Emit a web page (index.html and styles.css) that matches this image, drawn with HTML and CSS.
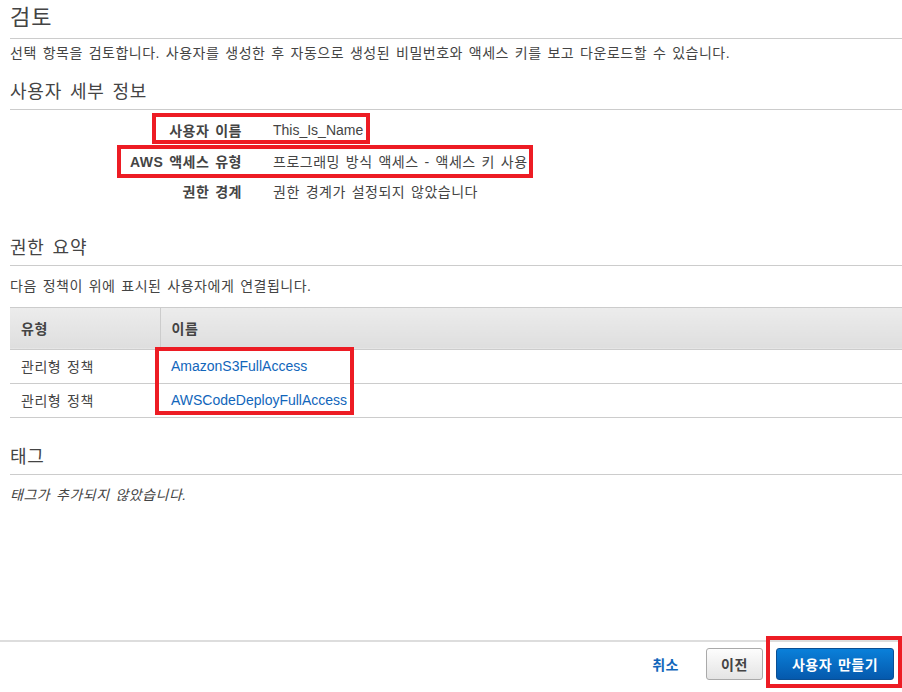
FILE: index.html
```html
<!DOCTYPE html>
<html lang="ko">
<head>
    <meta charset="UTF-8">
    <meta name="viewport" content="width=device-width, initial-scale=1.0">
    <title>검토</title>
    <link rel="stylesheet" href="styles.css">
</head>
<body>
    <div class="page">
        <main class="review">
            <h1 class="page-title">검토</h1>
            <p class="lead">선택 항목을 검토합니다. 사용자를 생성한 후 자동으로 생성된 비밀번호와 액세스 키를 보고 다운로드할 수 있습니다.</p>

            <h2 class="section-title">사용자 세부 정보</h2>
            <div class="details">
                <div class="detail-row">
                    <span class="detail-label">사용자 이름</span>
                    <span class="detail-value latin">This_Is_Name</span>
                </div>
                <div class="detail-row">
                    <span class="detail-label">AWS 액세스 유형</span>
                    <span class="detail-value">프로그래밍 방식 액세스 - 액세스 키 사용</span>
                </div>
                <div class="detail-row">
                    <span class="detail-label">권한 경계</span>
                    <span class="detail-value">권한 경계가 설정되지 않았습니다</span>
                </div>
            </div>

            <h2 class="section-title section-gap">권한 요약</h2>
            <p class="section-text">다음 정책이 위에 표시된 사용자에게 연결됩니다.</p>
            <table class="policy-table">
                <thead>
                    <tr>
                        <th class="col-type">유형</th>
                        <th>이름</th>
                    </tr>
                </thead>
                <tbody>
                    <tr>
                        <td>관리형 정책</td>
                        <td><a href="#" class="latin">AmazonS3FullAccess</a></td>
                    </tr>
                    <tr>
                        <td>관리형 정책</td>
                        <td><a href="#" class="latin">AWSCodeDeployFullAccess</a></td>
                    </tr>
                </tbody>
            </table>

            <h2 class="section-title tags-gap">태그</h2>
            <p class="empty-note">태그가 추가되지 않았습니다.</p>
        </main>

        <footer class="actions">
            <a href="#" class="cancel">취소</a>
            <button class="btn btn-secondary">이전</button>
            <button class="btn btn-primary">사용자 만들기</button>
        </footer>

        <!-- red annotation boxes drawn over the screenshot -->
        <div class="mark mark-name"></div>
        <div class="mark mark-access"></div>
        <div class="mark mark-policies"></div>
        <div class="mark mark-create"></div>
    </div>
</body>
</html>
```

FILE: styles.css
```css
* {
    box-sizing: border-box;
}
body {
    margin: 0;
    padding: 0;
    font-family: "Liberation Sans", "Noto Sans CJK KR", sans-serif;
    font-size: 14px;
    letter-spacing: 0.5px;
    word-spacing: 1.5px;
    color: #444;
    background: #fff;
}
.latin {
    letter-spacing: normal;
    word-spacing: normal;
}
.page {
    position: relative;
    height: 692px;
    display: flex;
    flex-direction: column;
    overflow: hidden;
}
.review {
    flex: 1;
    padding-left: 10px;
}
.page-title {
    margin: 0;
    padding-top: 4px;
    padding-bottom: 6px;
    font-size: 22px;
    font-weight: normal;
    line-height: 28px;
    letter-spacing: 1px;
    color: #444;
    border-bottom: 1px solid #ccc;
}
.lead {
    margin: 4px 0 0;
    line-height: 20px;
}
.section-title {
    margin: 17px 0 0;
    padding-bottom: 5px;
    font-size: 18px;
    font-weight: normal;
    line-height: 24px;
    letter-spacing: 0.8px;
    word-spacing: 2px;
    color: #444;
    border-bottom: 1px solid #ccc;
}
.section-gap {
    margin-top: 29px;
}
.tags-gap {
    margin-top: 27px;
}
.details {
    margin-top: 5px;
}
.detail-row {
    display: flex;
    align-items: center;
    height: 30.5px;
}
.detail-label {
    width: 232px;
    text-align: right;
    font-weight: bold;
}
.detail-value {
    margin-left: 31px;
}
.section-text {
    margin: 10px 0 0;
    line-height: 20px;
}
.policy-table {
    width: 100%;
    margin-top: 11px;
    border-collapse: collapse;
}
.policy-table th {
    height: 42px;
    padding: 0 11px;
    text-align: left;
    font-weight: bold;
    background: linear-gradient(#ececec, #dedede);
    border-top: 1px solid #ccc;
    border-bottom: 1px solid #ccc;
}
.policy-table th.col-type {
    width: 150px;
    border-right: 1px solid #ccc;
}
.policy-table td {
    height: 34px;
    padding: 0 11px;
    border-bottom: 1px solid #ccc;
}
.policy-table a {
    color: #1166bb;
    text-decoration: none;
}
.empty-note {
    margin: 10px 0 0;
    line-height: 20px;
    font-style: italic;
}
.actions {
    height: 52px;
    border-top: 2px solid #ddd;
    display: flex;
    align-items: center;
    justify-content: flex-end;
    padding: 0 8px 6px 0;
}
.cancel {
    color: #1166bb;
    font-weight: bold;
    text-decoration: none;
    margin-right: 27px;
}
.btn {
    height: 32px;
    font-family: inherit;
    font-size: 14px;
    font-weight: bold;
    letter-spacing: 0.5px;
    word-spacing: 1.5px;
    border-radius: 3px;
    cursor: pointer;
}
.btn-secondary {
    width: 57px;
    padding: 0;
    color: #444;
    background: linear-gradient(#fdfdfd, #e4e4e4);
    border: 1px solid #aaa;
    margin-right: 13px;
}
.btn-primary {
    width: 118px;
    padding: 0;
    color: #fff;
    background: linear-gradient(#0a80da, #0559ad);
    border: 1px solid #0a4f94;
}
.mark {
    position: absolute;
    border: 4px solid #ed1c24;
}
.mark-name {
    left: 152px;
    top: 113px;
    width: 218px;
    height: 31px;
}
.mark-access {
    left: 117px;
    top: 145px;
    width: 416px;
    height: 33px;
}
.mark-policies {
    left: 155px;
    top: 347px;
    width: 199px;
    height: 68px;
}
.mark-create {
    left: 766px;
    top: 636px;
    width: 136px;
    height: 52px;
}
```
